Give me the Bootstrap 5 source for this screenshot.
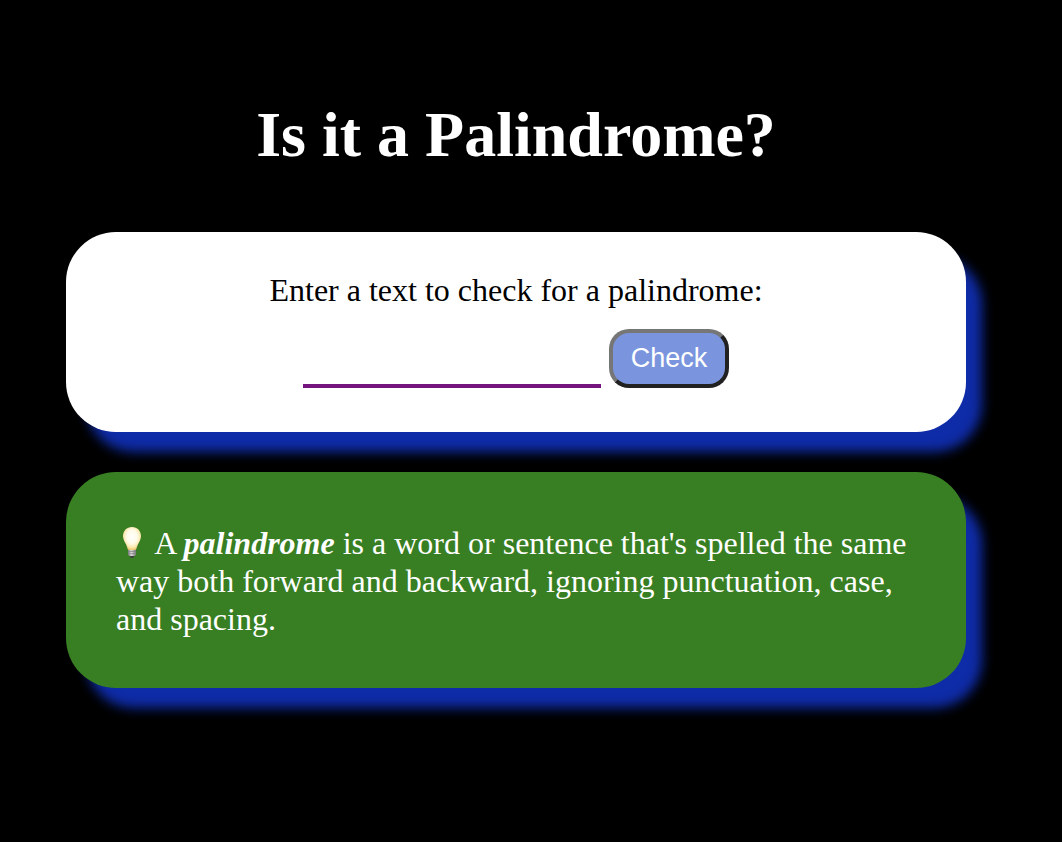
<!DOCTYPE html>
<html lang="en">
<head>
<meta charset="utf-8">
<meta name="viewport" content="width=device-width, initial-scale=1">
<title>Is it a Palindrome?</title>
<link href="https://cdn.jsdelivr.net/npm/bootstrap@5.3.0/dist/css/bootstrap.min.css" rel="stylesheet">
<style>
body { background: #000; color: #fff; font-family: "Liberation Serif", "Times New Roman", serif; font-size: 32px; line-height: 38px; }
.page { padding: 98px 96px 40px 66px; }
.title { font-size: 64px; line-height: 74px; font-weight: 700; margin-bottom: 60px; }
.panel { border-radius: 50px; box-shadow: 18px 22px 12px -2px #0f2ca8; }
.checker { background: #fff; color: #000; padding: 40px 40px 44px; margin-bottom: 40px; }
.checker label { line-height: 37px; margin-bottom: 20px; }
.text-field { width: 298px; height: 59px; border: 0; border-bottom: 4px solid #75147c; background: transparent; outline: 0; font-size: 28px; }
.check-btn { width: 120px; height: 59px; padding: 0 0 2px; border: 4px solid; border-color: #767676 #212121 #212121 #767676; border-radius: 20px; background: #7a95de; color: #fff; font-family: "Liberation Sans", Arial, sans-serif; font-size: 27px; line-height: 30px; }
.info { background: #387e22; padding: 52px 50px 50px; }
.bulb { width: 32px; height: 32px; vertical-align: -5px; }
</style>
</head>
<body>
<main class="page">
  <h1 class="title text-center">Is it a Palindrome?</h1>
  <form class="panel checker text-center">
    <label for="text-input" class="d-block">Enter a text to check for a palindrome:</label>
    <div class="d-flex justify-content-center gap-2">
      <input id="text-input" type="text" class="text-field">
      <button type="button" class="check-btn">Check</button>
    </div>
  </form>
  <section class="panel info">
    <p class="mb-0"><svg class="bulb" viewBox="0 0 32 32" role="img" aria-label="Light bulb">
      <defs>
        <radialGradient id="glass" cx="50%" cy="42%" r="58%">
          <stop offset="0" stop-color="#fffffa"/>
          <stop offset=".5" stop-color="#fffbea"/>
          <stop offset=".8" stop-color="#fbe8ae"/>
          <stop offset="1" stop-color="#e9c469"/>
        </radialGradient>
        <linearGradient id="metal" x1="0" x2="1" y1="0" y2="0">
          <stop offset="0" stop-color="#77787a"/>
          <stop offset=".4" stop-color="#dedede"/>
          <stop offset="1" stop-color="#77787a"/>
        </linearGradient>
      </defs>
      <path d="M13 28h6l-1.500 2.500q-1.500 1-3 0z" fill="#3a403c"/>
      <path d="M12 22h8v5q0 2-2 2h-4q-2 0-2-2z" fill="url(#metal)"/>
      <path d="M12.500 24.800l7-.6M12.500 27l7-.6" stroke="#77787a" stroke-width=".7"/>
      <path d="M16 0C10.700 0 7 3.900 7 9.100c0 3.200 1.500 5.400 3 8.100 1 1.900 1.200 3.600 1.700 4.900.3.700.8 1 1.500 1h5.600c.7 0 1.200-.3 1.500-1 .5-1.300.7-3 1.700-4.900 1.500-2.700 3-4.900 3-8.100C25 3.900 21.300 0 16 0z" fill="url(#glass)"/>
    </svg> A <dfn class="fw-bold">palindrome</dfn> is a word or sentence that's spelled the same way both forward and backward, ignoring punctuation, case, and spacing.</p>
  </section>
</main>
<script src="https://cdn.jsdelivr.net/npm/bootstrap@5.3.0/dist/js/bootstrap.bundle.min.js"></script>
</body>
</html>
